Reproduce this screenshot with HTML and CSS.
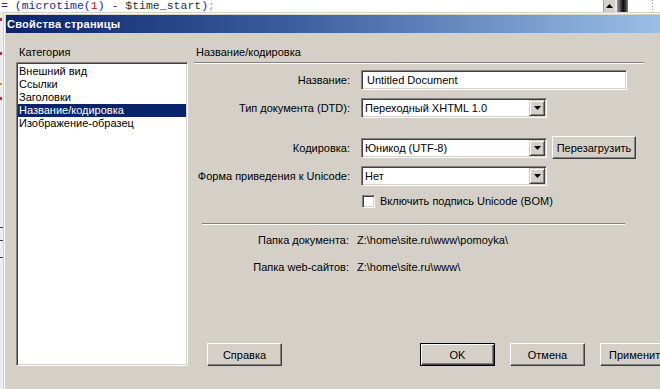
FILE: index.html
```html
<!DOCTYPE html>
<html lang="ru">
<head>
<meta charset="utf-8">
<title>Свойства страницы</title>
<link rel="stylesheet" href="styles.css">
</head>
<body>
<div class="screen">
  <div class="editor-line">
    <div class="code"><span class="op">= (</span><span class="fn">microtime</span><span class="op">(</span><span class="num">1</span><span class="op">) - </span><span class="var">$time_start</span><span class="op">)</span><span class="semi">;</span></div>
    <div class="scroll-btn"><svg width="7" height="4" viewBox="0 0 7 4"><path d="M3.5 0 L7 4 L0 4 Z" fill="#000"/></svg></div>
    <div class="scroll-gap"></div>
    <div class="scroll-thumb"></div>
    <div class="editor-rest"></div>
    <div class="ruler"></div>
  </div>
  <div class="desk">
    <div class="gutter"></div>
    <div class="dialog">
      <div class="dialog-inner">
        <div class="titlebar">Свойства страницы</div>
        <div class="dialog-body">
          <div class="left">
            <div class="cat-label">Категория</div>
            <ul class="listbox">
              <li>Внешний вид</li>
              <li>Ссылки</li>
              <li>Заголовки</li>
              <li class="selected">Название/кодировка</li>
              <li>Изображение-образец</li>
            </ul>
          </div>
          <div class="right">
            <div class="heading">Название/кодировка</div>
            <div class="etched heading-rule"></div>
            <div class="form">
              <div class="row r-title">
                <label class="lbl">Название:</label>
                <div class="textbox">Untitled Document</div>
              </div>
              <div class="row r-dtd">
                <label class="lbl">Тип документа (DTD):</label>
                <div class="combo"><span class="combo-text">Переходный XHTML 1.0</span><span class="drop"><svg width="7" height="4" viewBox="0 0 7 4"><path d="M0 0 L7 0 L3.5 4 Z" fill="#000"/></svg></span></div>
              </div>
              <div class="row r-enc">
                <label class="lbl">Кодировка:</label>
                <div class="ctrl-pair">
                  <div class="combo"><span class="combo-text">Юникод (UTF-8)</span><span class="drop"><svg width="7" height="4" viewBox="0 0 7 4"><path d="M0 0 L7 0 L3.5 4 Z" fill="#000"/></svg></span></div>
                  <button class="btn reload">Перезагрузить</button>
                </div>
              </div>
              <div class="row r-norm">
                <label class="lbl">Форма приведения к Unicode:</label>
                <div class="combo"><span class="combo-text">Нет</span><span class="drop"><svg width="7" height="4" viewBox="0 0 7 4"><path d="M0 0 L7 0 L3.5 4 Z" fill="#000"/></svg></span></div>
              </div>
              <div class="row r-bom">
                <span></span>
                <div class="check-row"><span class="checkbox"></span><span>Включить подпись Unicode (BOM)</span></div>
              </div>
            </div>
            <div class="etched inner-rule"></div>
            <div class="info">
              <div class="info-row r-doc"><span class="lbl">Папка документа:</span><span>Z:\home\site.ru\www\pomoyka\</span></div>
              <div class="info-row r-site"><span class="lbl">Папка web-сайтов:</span><span>Z:\home\site.ru\www\</span></div>
            </div>
            <div class="buttons">
              <button class="btn help">Справка</button>
              <button class="btn default ok">OK</button>
              <button class="btn">Отмена</button>
              <button class="btn">Применить</button>
            </div>
          </div>
        </div>
      </div>
    </div>
  </div>
</div>
</body>
</html>
```
FILE: styles.css
```css
* { box-sizing: border-box; }
html, body { margin: 0; padding: 0; }
body {
  width: 660px;
  height: 389px;
  overflow: hidden;
  background: #fff;
  font-family: "Liberation Sans", Arial, sans-serif;
  font-size: 11px;
  color: #000;
}
.screen { width: 660px; height: 389px; overflow: hidden; display: flex; flex-direction: column; }

/* editor strip behind the dialog */
.editor-line { height: 12px; display: flex; flex: none; background: #fff; }
.code {
  width: 604px;
  padding-left: 1px;
  font-family: "Liberation Mono", "Courier New", monospace;
  font-size: 11.5px;
  line-height: 12px;
  white-space: pre;
  border-right: 1px solid #a0a0a0;
  overflow: hidden;
}
.op { color: #2323b8; }
.fn { color: #1a2a9a; }
.num { color: #c01010; }
.var { color: #303030; }
.semi { color: #a0a0a0; }
.scroll-btn {
  width: 11px;
  background: #d4d0c8;
  display: flex;
  align-items: center;
  justify-content: center;
  padding-bottom: 1px;
}
.scroll-gap { width: 2px; background: #e8e8e8; }
.scroll-thumb {
  width: 11px;
  background: linear-gradient(90deg, #9a9a9a 0%, #505050 30%, #0a0a0a 55%, #3a3a3a 80%, #8a8a8a 100%);
}
.editor-rest { width: 24px; }
.ruler { width: 1px; background: repeating-linear-gradient(#909090 0 1px, #fff 1px 3px); }

.desk { display: flex; flex: 1; }
.gutter {
  width: 3px;
  flex: none;
  background:
    linear-gradient(#b03030, #b03030) 0 6px / 2px 3px no-repeat,
    linear-gradient(#b03030, #b03030) 0 40px / 2px 3px no-repeat,
    linear-gradient(#c0a020, #c0a020) 0 71px / 2px 2px no-repeat,
    linear-gradient(#b03030, #b03030) 0 85px / 2px 3px no-repeat,
    linear-gradient(#404040, #404040) 0 215px / 3px 1px no-repeat,
    linear-gradient(#404040, #404040) 0 228px / 3px 1px no-repeat,
    linear-gradient(#404040, #404040) 0 245px / 3px 1px no-repeat,
    #ececec;
}

/* dialog window */
.dialog {
  width: 700px;
  flex: none;
  border-top: 1px solid #d4d0c8;
  border-left: 1px solid #d4d0c8;
  background: #d4d0c8;
}
.dialog-inner {
  border-top: 1px solid #fff;
  border-left: 1px solid #fff;
  padding: 1px 0 0 1px;
  height: 100%;
}
.titlebar {
  height: 18px;
  background: linear-gradient(90deg, #0a246a 0%, #3a5c9c 40%, #a6caf0 100%);
  color: #fff;
  font-weight: bold;
  font-size: 11px;
  letter-spacing: 0.25px;
  line-height: 18px;
  padding-left: 1px;
  white-space: nowrap;
}
.dialog-body {
  display: grid;
  grid-template-columns: 172px 490px;
  column-gap: 6px;
  padding: 13px 0 0 10px;
}
.cat-label { line-height: 13px; padding-left: 3px; }
.listbox {
  list-style: none;
  margin: 3px 0 0 0;
  padding: 1px 0 0 0;
  height: 304px;
  background: #fff;
  border: 1px solid;
  border-color: #808080 #fff #fff #808080;
  box-shadow: inset 1px 1px #404040, inset -1px -1px #d4d0c8;
}
.listbox li {
  margin: 0 1px 0 1px;
  height: 13px;
  line-height: 13px;
  padding-left: 1px;
  white-space: nowrap;
}
.listbox li:first-child { margin-top: 1px; }
.listbox li.selected { background: #0a246a; color: #fff; }

.right { display: flex; flex-direction: column; height: 320px; }
.heading { line-height: 13px; padding-left: 2px; }
.etched { height: 2px; border-top: 1px solid #808080; border-bottom: 1px solid #fff; }
.heading-rule { margin-top: 3px; width: 450px; }
.inner-rule { margin: 15px 0 0 8px; width: 423px; }

.form { display: flex; flex-direction: column; }
.row {
  display: grid;
  grid-template-columns: 156px auto;
  column-gap: 11px;
  align-items: center;
}
.lbl { text-align: right; white-space: nowrap; }
.r-title { margin-top: 6px; }
.r-dtd { margin-top: 8px; }
.r-enc { margin-top: 18px; }
.r-norm { margin-top: 7px; }
.r-bom { margin-top: 9px; }

.textbox, .combo {
  height: 20px;
  background: #fff;
  border: 1px solid;
  border-color: #808080 #fff #fff #808080;
  box-shadow: inset 1px 1px #404040, inset -1px -1px #d4d0c8;
  white-space: nowrap;
}
.textbox { width: 266px; padding: 0 0 0 5px; line-height: 18px; }
.combo {
  width: 186px;
  display: flex;
  align-items: center;
  padding: 1px 1px 1px 1px;
}
.combo-text { flex: 1; padding-left: 2px; line-height: 16px; }
.drop {
  width: 16px;
  height: 16px;
  background: #d4d0c8;
  border: 1px solid;
  border-color: #d4d0c8 #404040 #404040 #d4d0c8;
  box-shadow: inset 1px 1px #fff, inset -1px -1px #808080;
  display: flex;
  align-items: center;
  justify-content: center;
}
.ctrl-pair { display: flex; align-items: center; gap: 5px; }

.btn {
  font-family: inherit;
  font-size: 11px;
  color: #000;
  width: 75px;
  height: 23px;
  padding: 0;
  background: #d4d0c8;
  border: 1px solid;
  border-color: #fff #404040 #404040 #fff;
  box-shadow: inset -1px -1px #808080;
  white-space: nowrap;
}
.btn.reload { width: 84px; }
.btn.default {
  border: 1px solid #000;
  box-shadow: inset 1px 1px #fff, inset -1px -1px #404040, inset -2px -2px #808080;
}

.check-row { display: flex; align-items: center; gap: 5px; padding-left: 1px; line-height: 13px; }
.checkbox {
  width: 13px;
  height: 13px;
  background: #fff;
  border: 1px solid;
  border-color: #808080 #fff #fff #808080;
  box-shadow: inset 1px 1px #404040, inset -1px -1px #d4d0c8;
}

.info { display: flex; flex-direction: column; }
.info-row {
  display: grid;
  grid-template-columns: 155px auto;
  column-gap: 8px;
  line-height: 13px;
  white-space: nowrap;
}
.r-doc { margin-top: 9px; }
.r-site { margin-top: 14px; }

.buttons { margin-top: auto; display: flex; gap: 15px; padding-left: 13px; }
.btn.ok { margin-left: 123px; }
```
